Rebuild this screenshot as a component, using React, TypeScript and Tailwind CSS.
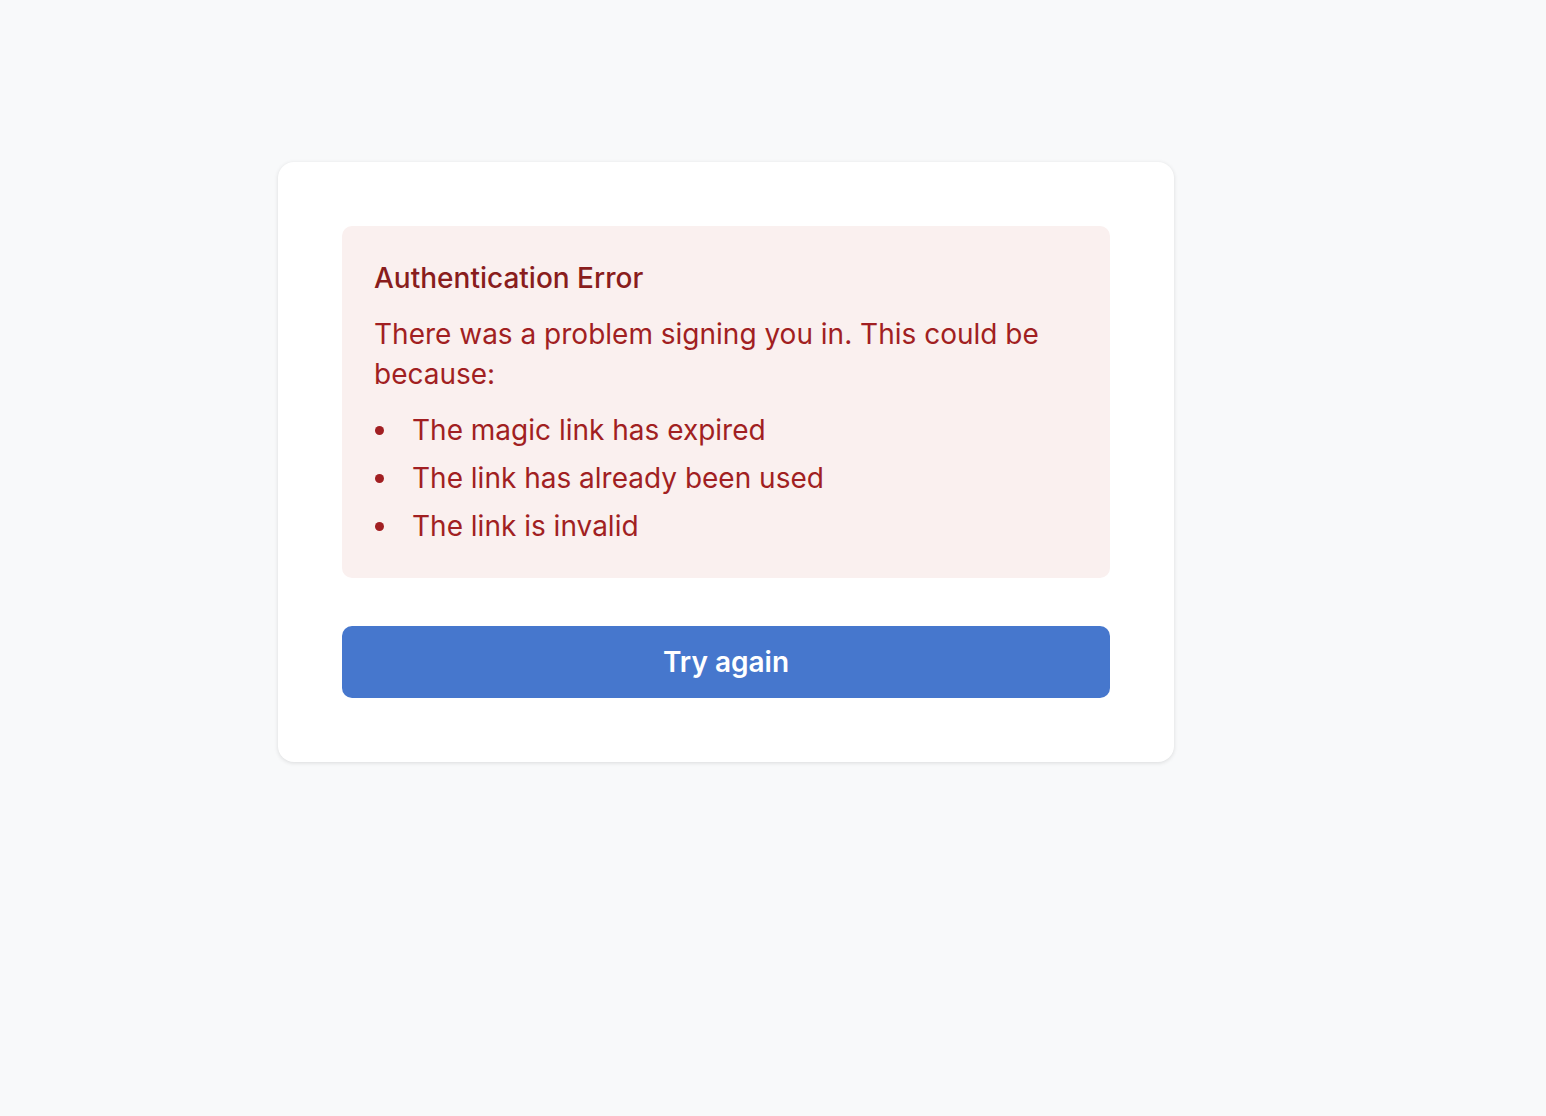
import React from "react";

const reasons = [
  "The magic link has expired",
  "The link has already been used",
  "The link is invalid",
];

export default function App() {
  return (
    <div
      className="min-h-screen w-full bg-[#f8f9fa] pt-[162px] pl-[278px]"
      style={{ fontFamily: "Inter, 'Noto Sans', sans-serif" }}
    >
      <div className="w-[896px] rounded-2xl bg-white p-16 shadow-[0_1px_4px_rgba(0,0,0,0.12)]">
        {/* Error box */}
        <div className="rounded-[10px] bg-[#faf0ef] p-8">
          <h2 className="mb-4 text-[28px] leading-[40px] font-medium text-[#891d1d]">
            Authentication Error
          </h2>
          <p className="text-[28px] leading-[40px] text-[#a11f22]">
            There was a problem signing you in. This could be because:
          </p>
          <ul className="mt-4 space-y-2">
            {reasons.map((r) => (
              <li key={r} className="flex items-center text-[28px] leading-[40px] text-[#a11f22]">
                <span className="ml-[1px] mr-[28px] h-[9px] w-[9px] rounded-full bg-[#a11f22]" />
                {r}
              </li>
            ))}
          </ul>
        </div>

        <button className="mt-12 flex h-[72px] w-full items-center justify-center rounded-[10px] bg-[#4677cd] text-[28px] font-semibold text-white">
          Try again
        </button>
      </div>
    </div>
  );
}
